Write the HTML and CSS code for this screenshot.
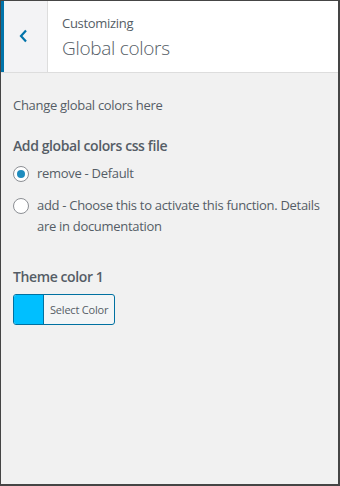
FILE: index.html
```html
<!DOCTYPE html>
<html lang="en">

<head>
    <meta charset="UTF-8">
    <meta name="viewport" content="width=device-width, initial-scale=1.0">
    <title>Global colors</title>

    <link rel="stylesheet" href="styles.css">
</head>

<body>
    <div class="frame">
        <div class="header">
            <button class="back" aria-label="Back">
                <svg width="12" height="14" viewBox="0 0 12 14">
                    <path d="M8 1.5 L3 7 L8 12.5" fill="none" stroke="#0073aa" stroke-width="2.2" />
                </svg>
            </button>
            <div class="title">
                <span class="crumb">Customizing</span>
                <h3>Global colors</h3>
            </div>
        </div>

        <div class="content">
            <p class="desc">Change global colors here</p>

            <div class="field">
                <span class="label">Add global colors css file</span>
                <label class="radio">
                    <input type="radio" name="css_file" checked>
                    <span>remove - Default</span>
                </label>
                <label class="radio">
                    <input type="radio" name="css_file">
                    <span>add - Choose this to activate this function. Details are in documentation</span>
                </label>
            </div>

            <div class="field">
                <span class="label">Theme color 1</span>
                <button class="color-btn">
                    <span class="swatch"></span>
                    <span class="color-text">Select Color</span>
                </button>
            </div>
        </div>
    </div>
</body>

</html>
```

FILE: styles.css
```css
* {
    box-sizing: border-box;
    margin: 0;
    padding: 0;
}

html,
body {
    height: 100%;
}

body {
    font-family: "Open Sans", "Noto Sans", sans-serif;
    color: #555d66;
    background: #f1f1f1;
    letter-spacing: -0.3px;
}

.frame {
    height: 100%;
    border-style: solid;
    border-color: #454545;
    border-width: 1px 2px 2px 1px;
    background: #f1f1f1;
    display: flex;
    flex-direction: column;
}

.header {
    display: flex;
    height: 72px;
    background: #fff;
    border-bottom: 1px solid #dddddd;
}

.back {
    width: 47px;
    flex: none;
    background: #f3f3f5;
    border: 0;
    border-left: 3px solid #0073aa;
    border-right: 1px solid #dddddd;
    display: flex;
    align-items: center;
    justify-content: center;
    padding-right: 4px;
    padding-bottom: 2px;
}

.title {
    padding: 12px 0 0 14px;
    display: flex;
    flex-direction: column;
}

.crumb {
    font-size: 13px;
    line-height: 20px;
    color: #555d66;
}

.title h3 {
    font-size: 19px;
    font-weight: 300;
    line-height: 30px;
    color: #555d66;
}

.content {
    padding: 22px 12px 0 12px;
    font-size: 13px;
}

.desc {
    line-height: 20px;
    margin-bottom: 21px;
}

.field {
    display: flex;
    flex-direction: column;
    align-items: flex-start;
    margin-bottom: 19px;
}

.label {
    font-size: 14px;
    font-weight: 600;
    line-height: 20px;
    color: #555d66;
    margin-bottom: 7px;
    letter-spacing: -0.4px;
}

.radio {
    display: flex;
    align-items: flex-start;
    gap: 8px;
    line-height: 21px;
    margin-bottom: 11px;
}

.radio input {
    appearance: none;
    -webkit-appearance: none;
    width: 16px;
    height: 16px;
    flex: none;
    border: 1px solid #8c8f94;
    border-radius: 50%;
    background: #fff;
    margin-top: 3px;
    display: flex;
    align-items: center;
    justify-content: center;
}

.radio input:checked::before {
    content: "";
    width: 8px;
    height: 8px;
    border-radius: 50%;
    background: #1e8cbe;
}

.color-btn {
    display: flex;
    height: 31px;
    border: 1px solid #0071a1;
    border-radius: 3px;
    overflow: hidden;
    background: #f3f5f6;
    font-family: inherit;
    letter-spacing: -0.2px;
    cursor: pointer;
}

.swatch {
    width: 30px;
    background: #00bfff;
    border-right: 1px solid #0071a1;
}

.color-text {
    font-size: 11px;
    line-height: 29px;
    padding: 0 6px 0 6px;
    color: #555d66;
}
```
